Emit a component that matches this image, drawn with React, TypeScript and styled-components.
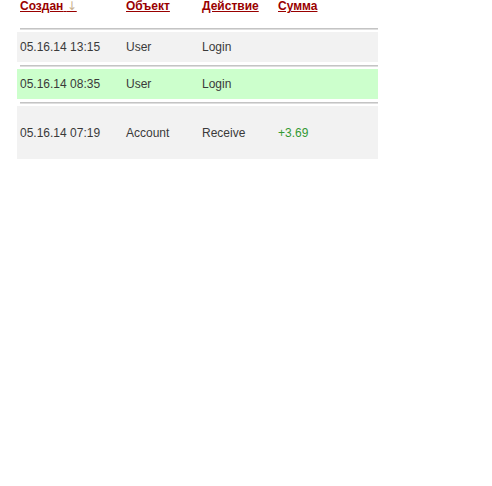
import React from 'react'
import styled, { createGlobalStyle } from 'styled-components'

const GlobalStyle = createGlobalStyle`
  body {
    margin: 0;
    background: #fff;
    font-family: "Liberation Sans", Arial, sans-serif;
  }
`

const COLUMNS = '106px 76px 76px 103px'

const Wrapper = styled.div`
  width: 361px;
  margin-left: 17px;
`

const HeaderRow = styled.div`
  display: grid;
  grid-template-columns: ${COLUMNS};
  height: 28px;
  padding-left: 3px;
  align-items: start;
`

const SortLink = styled.a`
  justify-self: start;
  font-size: 12px;
  line-height: 12px;
  font-weight: bold;
  color: #990000;
  text-decoration: underline;
  cursor: pointer;
  white-space: nowrap;
`

// sort direction mark, underline still comes from the link
const SortArrow = styled.span`
  font-family: "DejaVu Sans", sans-serif;
  font-weight: normal;
  font-size: 12px;
  color: #c9b28e;
`

const Separator = styled.div<{ $first?: boolean }>`
  height: 0;
  margin: ${(p) => (p.$first ? '0' : '3px')} 0 2px 3px;
  border-top: 1px solid #c4c4c4;
  border-bottom: 1px solid #dedede;
`

const Row = styled.div<{ $tone: 'gray' | 'green'; $tall?: boolean }>`
  display: grid;
  grid-template-columns: ${COLUMNS};
  align-items: center;
  height: ${(p) => (p.$tall ? '53px' : '30px')};
  padding-left: 3px;
  background: ${(p) => (p.$tone === 'green' ? '#ccffcc' : '#f2f2f2')};
  font-size: 12px;
  color: #3a3a3a;
`

const Amount = styled.span<{ $positive?: boolean }>`
  color: ${(p) => (p.$positive ? '#339933' : '#3a3a3a')};
`

interface LogItem {
  created: string
  object: string
  action: string
  amount?: string
  tone: 'gray' | 'green'
  tall?: boolean
}

const items: LogItem[] = [
  { created: '05.16.14 13:15', object: 'User', action: 'Login', tone: 'gray' },
  { created: '05.16.14 08:35', object: 'User', action: 'Login', tone: 'green' },
  { created: '05.16.14 07:19', object: 'Account', action: 'Receive', amount: '+3.69', tone: 'gray', tall: true },
]

const App = () => {
  return (
    <>
      <GlobalStyle />
      <Wrapper>
        <HeaderRow>
          <SortLink>Создан{'\u00a0'}<SortArrow>↓</SortArrow></SortLink>
          <SortLink>Объект</SortLink>
          <SortLink>Действие</SortLink>
          <SortLink>Сумма</SortLink>
        </HeaderRow>
        {items.map((item, i) => (
          <React.Fragment key={i}>
            <Separator $first={i === 0} />
            <Row $tone={item.tone} $tall={item.tall}>
              <span>{item.created}</span>
              <span>{item.object}</span>
              <span>{item.action}</span>
              <Amount $positive={item.amount?.startsWith('+')}>{item.amount}</Amount>
            </Row>
          </React.Fragment>
        ))}
      </Wrapper>
    </>
  )
}

export default App
